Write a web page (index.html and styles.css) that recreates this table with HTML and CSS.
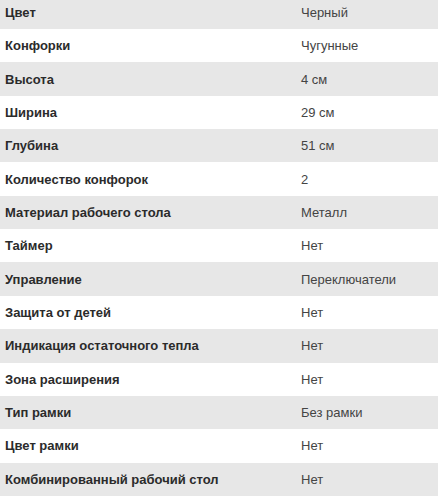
FILE: index.html
```html
<!DOCTYPE html>
<html lang="ru">
<head>
<meta charset="utf-8">
<link rel="stylesheet" href="styles.css">
</head>
<body>
<table class="specs">
<tr><td class="name">Цвет</td><td class="val">Черный</td></tr>
<tr><td class="name">Конфорки</td><td class="val">Чугунные</td></tr>
<tr><td class="name">Высота</td><td class="val">4 см</td></tr>
<tr><td class="name">Ширина</td><td class="val">29 см</td></tr>
<tr><td class="name">Глубина</td><td class="val">51 см</td></tr>
<tr><td class="name">Количество конфорок</td><td class="val">2</td></tr>
<tr><td class="name">Материал рабочего стола</td><td class="val">Металл</td></tr>
<tr><td class="name">Таймер</td><td class="val">Нет</td></tr>
<tr><td class="name">Управление</td><td class="val">Переключатели</td></tr>
<tr><td class="name">Защита от детей</td><td class="val">Нет</td></tr>
<tr><td class="name">Индикация остаточного тепла</td><td class="val">Нет</td></tr>
<tr><td class="name">Зона расширения</td><td class="val">Нет</td></tr>
<tr><td class="name">Тип рамки</td><td class="val">Без рамки</td></tr>
<tr><td class="name">Цвет рамки</td><td class="val">Нет</td></tr>
<tr><td class="name">Комбинированный рабочий стол</td><td class="val">Нет</td></tr>
</table>
</body>
</html>
```
FILE: styles.css
```css
html, body {
  margin: 0;
  padding: 0;
  background: #fff;
}
.specs {
  width: 438px;
  border-collapse: collapse;
  margin-top: -4.4px;
  font-family: "Liberation Sans", Arial, sans-serif;
  font-size: 13px;
  color: #333;
}
.specs tr {
  height: 33.36px;
}
.specs tr:nth-child(odd) {
  background: #e7e7e7;
}
.specs td {
  padding: 0 0 0 5px;
  vertical-align: middle;
}
.specs .name {
  width: 291px;
  font-weight: bold;
  color: #2b2b2b;
}
.specs .val {
  color: #444;
}
```
